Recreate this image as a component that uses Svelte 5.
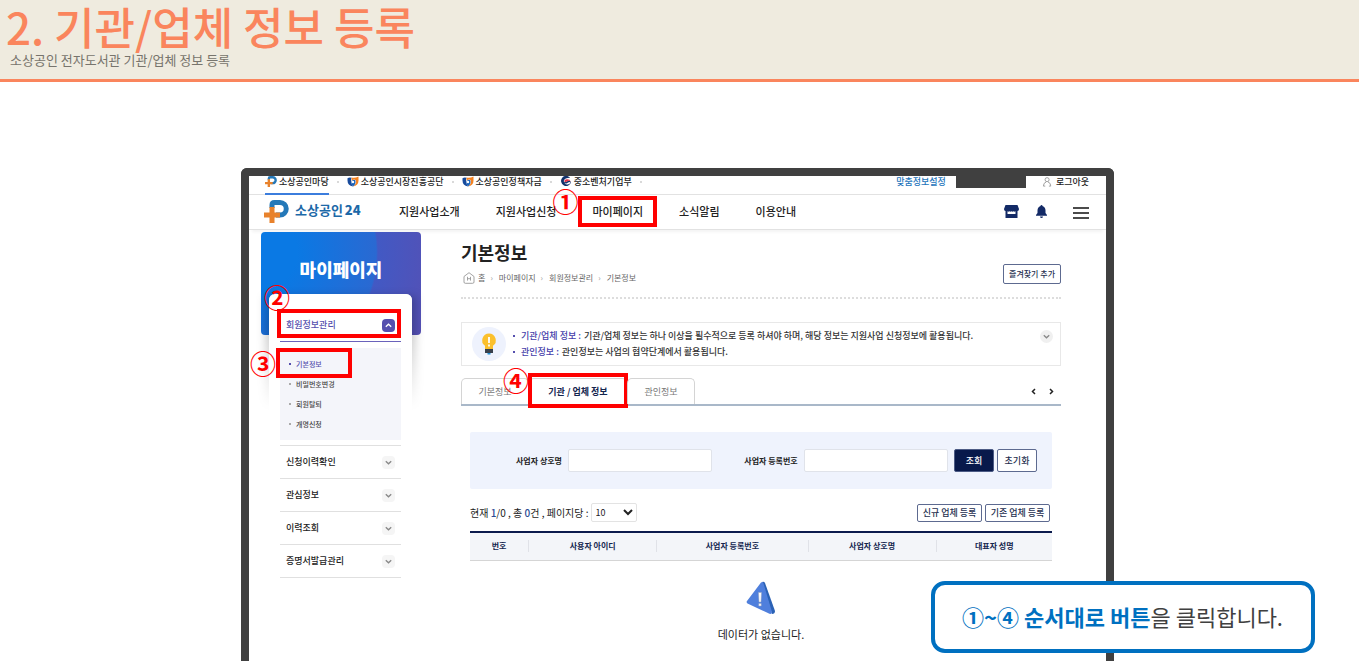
<script>
	const menu = ['지원사업소개', '지원사업신청', '마이페이지', '소식알림', '이용안내']
	const sites = [
		{ name: '소상공인마당', icon: 'plus' },
		{ name: '소상공인시장진흥공단', icon: 'semas' },
		{ name: '소상공인정책자금', icon: 'semas' },
		{ name: '중소벤처기업부', icon: 'gov' }
	]
	const subMenu = ['기본정보', '비밀번호변경', '회원탈퇴', '개명신청']
	const sideMenu = ['신청이력확인', '관심정보', '이력조회', '증명서발급관리']
	const path = ['홈', '마이페이지', '회원정보관리', '기본정보']
	const columns = ['번호', '사용자 아이디', '사업자 등록번호', '사업자 상호명', '대표자 성명']

	let company = $state('')
	let bizNumber = $state('')
	let pageSize = $state('10')

	const reset = () => {
		company = ''
		bizNumber = ''
	}
</script>

{#snippet plusLogo()}
	<svg viewBox="0 0 25 23" aria-hidden="true">
		<path d="M8 8V5q0-2.500 2.500-2.500H16a6 6 0 0 1 0 12.500h-4" fill="none" stroke="#2478b8" stroke-width="5" />
		<path d="M5.500 7h5v5.500H16v5h-5.500V23h-5v-5.500H0v-5h5.500z" fill="#e8822c" />
	</svg>
{/snippet}

{#snippet chevron(up)}
	<svg viewBox="0 0 12 12" aria-hidden="true">
		<path d={up ? 'M3.500 7.200 6 4.800l2.500 2.400' : 'M3.500 4.800 6 7.200l2.500-2.400'} fill="none" stroke="currentColor" stroke-width="1.200" />
	</svg>
{/snippet}

<div class="page">
	<header class="heading">
		<h1>2. 기관/업체 정보 등록</h1>
		<p>소상공인 전자도서관 기관/업체 정보 등록</p>
	</header>

	<div class="screen">
		<div class="topbar">
			{#each sites as site, i}
				<a href="#site" class:current={i === 0}>
					{#if site.icon === 'plus'}
						{@render plusLogo()}
					{:else if site.icon === 'semas'}
						<svg viewBox="0 0 12 12" aria-hidden="true">
							<path d="M0 2.500Q2 1 4.500 2 2.500 6 6 11.500 0 10.500 0 5z" fill="#174a9c" />
							<path d="M4.500 1.500Q8 2.500 12 .500V5q0 5.500-6 6.500 4-3 3-7-2-1.500-4.500 1z" fill="#f58220" />
							<path d="M4.500 5.500q2.500-2 4-1 1 4-2.500 7-2.500-3-1.500-6z" fill="#1a62b8" />
							<circle cx="6" cy="6.500" r="1.300" fill="#fff" />
						</svg>
					{:else}
						<svg viewBox="0 0 12 12" aria-hidden="true">
							<path d="M10.500 2A5.500 5.500 0 1 0 11.500 6.500Q9 4 7 6 4 8 3.500 5.500 4.500 2 10.500 2z" fill="#12316b" />
							<path d="M4 5.500Q5 3 7.500 3.500q3 0 3.500 2.500Q9 4.500 7 6 4.500 7.500 4 5.500z" fill="#e0344a" />
							<path d="M4 7q1 2 3.500.500T11 7Q10 9 7.500 9.200 4.800 9.500 4 7z" fill="#fff" />
						</svg>
					{/if}
					<span>{site.name}</span>
				</a>
				<i class="dot"></i>
			{/each}
			<div class="account">
				<a href="#custom" class="custom">맞춤정보설정</a>
				<span class="user"></span>
				<a href="#logout">
					<svg class="person" viewBox="0 0 12 12" aria-hidden="true">
						<circle cx="5" cy="4" r="2.200" fill="none" stroke="#999" />
						<path d="M1 11q0-3.500 3-4.500M9 11q0-3.500-3-4.500M1 11h2M7 11h2" fill="none" stroke="#999" />
					</svg>
					<span>로그아웃</span>
				</a>
			</div>
		</div>

		<nav class="gnb" aria-label="주메뉴">
			<a href="#home" class="logo">{@render plusLogo()}<span>소상공인<b>24</b></span></a>
			<ul>
				{#each menu as item, i}
					<li>
						<a href="#menu">{item}</a>
						{#if i === 2}<span class="mark one"><em>①</em></span>{/if}
					</li>
				{/each}
			</ul>
			<div class="tools">
				<button aria-label="상점">
					<svg width="15" height="13" viewBox="0 0 15 13">
						<path d="M1.500 0h12L15 4q0 2-1.500 2v7h-12V6Q0 6 0 4zM3.500 6.300V9h8V6.300q-1 .700-2 0-1 .700-2 0-1 .700-2 0-1 .700-2 0z" fill="#132a66" fill-rule="evenodd" />
					</svg>
				</button>
				<button aria-label="알림">
					<svg width="11" height="13" viewBox="0 0 11 13">
						<path d="M4.500 1a1 1 0 0 1 2 0Q9.500 2 9.500 5.500V8L11 10v.800H0V10l1.500-2V5.500Q1.500 2 4.500 1zM4 11.500h3Q6.800 13 5.500 13T4 11.500z" fill="#132a66" />
					</svg>
				</button>
				<button aria-label="전체메뉴" class="all">
					<svg width="16" height="12" viewBox="0 0 16 12">
						<path d="M0 1h16M0 6h16M0 11h16" stroke="#111" stroke-width="1.600" />
					</svg>
				</button>
			</div>
		</nav>

		<div class="body">
			<aside>
				<h2>마이페이지</h2>
				<div class="side-card">
					<div class="side-open">
						<a href="#member">회원정보관리</a>
						<button class="toggle on" aria-label="접기">{@render chevron(true)}</button>
						<span class="mark two"><em>②</em></span>
					</div>
					<ul class="sub">
						{#each subMenu as item, i}
							<li class:active={i === 0}>
								<a href="#sub">{item}</a>
								{#if i === 0}<span class="mark three"><em>③</em></span>{/if}
							</li>
						{/each}
					</ul>
					<ul class="side">
						{#each sideMenu as item}
							<li>
								<a href="#side">{item}</a>
								<button class="toggle" aria-label="펼치기">{@render chevron(false)}</button>
							</li>
						{/each}
					</ul>
				</div>
			</aside>

			<main>
				<div class="title">
					<div>
						<h2>기본정보</h2>
						<ol>
							{#each path as step, i}
								<li>
									{#if i === 0}
										<svg width="12" height="12" viewBox="0 0 12 12" aria-hidden="true">
											<path d="M1 4.500 6 .700l5 3.800v5.500q0 1.300-1.300 1.300H2.300Q1 11.300 1 10zM4.500 4.800v3.800M7.500 4.800v3.800M4.500 6.700h3" fill="none" stroke="#999" stroke-width=".900" />
										</svg>
									{/if}
									{step}
								</li>
							{/each}
						</ol>
					</div>
					<button class="line">즐겨찾기 추가</button>
				</div>

				<section class="notice">
					<svg width="34" height="34" viewBox="0 0 34 34" aria-hidden="true">
						<circle cx="17" cy="17" r="17" fill="#eef2fd" />
						<path d="M17 6.500a6.800 6.800 0 0 0-4 12.300V22h8v-3.200a6.800 6.800 0 0 0-4-12.300z" fill="#fbc02d" />
						<path d="M17 10v6M17 17.500v2" stroke="#fff" stroke-width="1.800" />
						<path d="M13 22h8v4h-8z" fill="#37404d" />
						<path d="M15.500 26h3v1.500h-3z" fill="#1d8fd8" />
					</svg>
					<ul>
						<li><b>기관/업체 정보 :</b> 기관/업체 정보는 하나 이상을 필수적으로 등록 하셔야 하며, 해당 정보는 지원사업 신청정보에 활용됩니다.</li>
						<li><b>관인정보 :</b> 관인정보는 사업의 협약단계에서 활용됩니다.</li>
					</ul>
					<button class="toggle round" aria-label="펼치기">{@render chevron(false)}</button>
				</section>

				<div class="tabs">
					<button>기본정보</button>
					<button class="selected">기관 / 업체 정보<span class="mark four"><em>④</em></span></button>
					<button>관인정보</button>
					<div class="arrows">
						<button aria-label="이전"><svg width="5" height="7" viewBox="0 0 5 7"><path d="M4 1 1.500 3.500 4 6" fill="none" stroke="#222" stroke-width="1.500" /></svg></button>
						<button aria-label="다음"><svg width="5" height="7" viewBox="0 0 5 7"><path d="M1 1l2.500 2.500L1 6" fill="none" stroke="#222" stroke-width="1.500" /></svg></button>
					</div>
				</div>

				<div class="content">
					<form class="search" onsubmit={(e) => e.preventDefault()}>
						<label for="company">사업자 상호명</label>
						<input id="company" type="text" bind:value={company}>
						<label for="biz">사업자 등록번호</label>
						<input id="biz" type="text" bind:value={bizNumber}>
						<div class="buttons">
							<button class="navy">조회</button>
							<button type="button" class="line" onclick={reset}>초기화</button>
						</div>
					</form>

					<div class="count">
						<label for="size">현재 <b>1</b>/0 , 총 <b>0</b>건 , 페이지당 :</label>
						<select id="size" bind:value={pageSize}>
							<option>10</option>
							<option>20</option>
							<option>50</option>
						</select>
						<div class="buttons">
							<button class="line">신규 업체 등록</button>
							<button class="line">기존 업체 등록</button>
						</div>
					</div>

					<table>
						<thead>
							<tr>
								{#each columns as column}
									<th><span>{column}</span></th>
								{/each}
							</tr>
						</thead>
						<tbody>
							<tr>
								<td colspan="5">
									<svg width="30" height="34" viewBox="0 0 30 34" aria-hidden="true">
										<path d="M16 1q2-1 3 1l10 28q0 3-3 3z" fill="#2b62b5" />
										<path d="M15 1.500q2-1.500 2.500 1L26 31q0 2.500-2.500 1.800L1.500 22.500Q0 21.500 1 20z" fill="#4f7fdc" />
										<path d="M12.500 11.500h3L15 21h-2zM12.800 22.500h2.400V25h-2.400z" fill="#fff" stroke="#98a5bd" stroke-width=".500" />
									</svg>
									<p>데이터가 없습니다.</p>
								</td>
							</tr>
						</tbody>
					</table>
				</div>
			</main>
		</div>
	</div>

	<p class="callout"><b>①~④ 순서대로 버튼</b>을 클릭합니다.</p>
</div>

<style>
	:global(body) {
		margin: 0;
		background: #fff;
	}
	.page, .page * {
		box-sizing: border-box;
	}
	.page {
		position: relative;
		display: flex;
		flex-direction: column;
		min-height: 100vh;
		font-family: "Noto Sans CJK KR", "Noto Sans", sans-serif;
		font-size: 9px;
		line-height: 12px;
		color: #222;
	}
	h1, h2, p, ul, ol {
		margin: 0;
		padding: 0;
	}
	ul, ol {
		list-style: none;
	}
	a {
		color: inherit;
		text-decoration: none;
	}
	button, input, select {
		font: inherit;
		color: inherit;
	}
	button {
		padding: 0;
		border: 0;
		background: none;
		cursor: pointer;
	}
	svg {
		display: block;
		flex: none;
	}

	.heading {
		padding: 0 6px 11px;
		background: #efebdf;
		border-bottom: 3px solid #fa855d;
	}
	h1 {
		font-size: 44px;
		font-weight: 500;
		line-height: 52px;
		color: #fa855d;
	}
	.heading p {
		padding-left: 4px;
		font-size: 13px;
		line-height: 16px;
		color: #77746c;
	}

	.screen {
		flex: 1;
		margin: 86px 245px 0 241px;
		border: 8px solid #404040;
		border-bottom: 0;
		border-radius: 6px 6px 0 0;
	}

	.topbar {
		display: flex;
		align-items: center;
		gap: 8px;
		height: 19px;
		padding: 0 17px 7px 16px;
		border-bottom: 1px solid #e2e2e2;
		font-weight: 500;
	}
	.topbar a {
		position: relative;
		display: flex;
		align-items: center;
		gap: 2px;
	}
	.topbar a svg {
		width: 12px;
		height: 11px;
	}
	.topbar .current::after {
		content: "";
		position: absolute;
		left: 0;
		right: 0;
		bottom: -7px;
		height: 2px;
		background: #3b7ddd;
	}
	.dot {
		width: 2px;
		height: 2px;
		border-radius: 50%;
		background: #ccc;
	}
	.account {
		display: flex;
		align-items: center;
		gap: 10px;
		margin-left: auto;
	}
	.account .custom {
		color: #1c74bb;
	}
	.user {
		width: 70px;
		height: 12px;
		margin-right: 6px;
		background: #404040;
	}

	.gnb {
		display: flex;
		align-items: center;
		height: 35px;
		padding: 0 17px 2px 15px;
		border-bottom: 1px solid #e2e2e2;
		box-shadow: 0 5px 3px -3px #f3f3f3;
	}
	.logo {
		display: flex;
		gap: 6px;
		width: 135px;
		font-size: 13px;
		font-weight: 700;
		line-height: 20px;
		color: #1d69a8;
	}
	.logo svg {
		width: 25px;
		height: 23px;
	}
	.logo b {
		padding-left: 2px;
	}
	.gnb ul {
		display: flex;
		gap: 36px;
		font-size: 11px;
		font-weight: 500;
		line-height: 16px;
	}
	.gnb li {
		position: relative;
	}
	.tools {
		display: flex;
		align-items: center;
		gap: 17px;
		margin-left: auto;
	}
	.tools .all {
		padding: 4px 0 0 9px;
	}

	/* red guide boxes and their numbers */
	.mark {
		position: absolute;
		border: 4px solid #f00;
		pointer-events: none;
	}
	.mark em {
		position: absolute;
		font-size: 26px;
		font-style: normal;
		font-weight: 700;
		line-height: 26px;
		color: #f00;
	}
	.one {
		inset: -7px -14px -8px;
	}
	.one em {
		left: -30px;
		top: -12px;
	}
	.two {
		inset: 15px 0 3px -3px;
	}
	.two em {
		left: -17px;
		top: -29px;
	}
	.three {
		inset: -6px 49px -4px -4px;
	}
	.three em {
		left: -30px;
		top: -2px;
	}
	.four {
		inset: -6px -2px -4px;
	}
	.four em {
		left: -29px;
		top: -10px;
	}

	.body {
		display: flex;
		gap: 40px;
		padding: 2px 45px 0 12px;
	}
	aside {
		flex: none;
		width: 160px;
	}
	aside h2 {
		height: 103px;
		padding-top: 25px;
		border-radius: 4px;
		background: radial-gradient(circle at 0 20%, #0a79e4 20%, #2a69d2 64%, #4259c4 65%, #5650b4);
		font-size: 18px;
		font-weight: 900;
		line-height: 24px;
		text-align: center;
		color: #fff;
	}
	.side-card {
		position: relative;
		z-index: 1;
		margin: -41px 9px 0 8px;
		padding: 0 11px;
		border-radius: 6px;
		background: #fff;
	}
	.side-card::before {
		content: "";
		position: absolute;
		z-index: -2;
		inset: 2px -4px auto;
		height: 112px;
		background: linear-gradient(#0003 30%, #0000);
		filter: blur(4px);
	}
	.side-card::after {
		content: "";
		position: absolute;
		z-index: -1;
		inset: 0;
		border-radius: 6px;
		background: #fff;
	}
	.side-open {
		position: relative;
		display: flex;
		align-items: center;
		justify-content: space-between;
		height: 48px;
		padding: 15px 6px 0;
		border-bottom: 1px solid #6a62bb;
		font-weight: 500;
		color: #554fae;
	}
	.toggle {
		width: 13px;
		height: 13px;
		border-radius: 4px;
		background: #f5f5f5;
		color: #888;
	}
	.toggle.on {
		background: #554fae;
		color: #fff;
	}
	.sub {
		margin: 6px 0 5px;
		padding: 6px 0;
		background: #f4f5fa;
		font-size: 7px;
		font-weight: 500;
		color: #444;
	}
	.sub li {
		position: relative;
		display: flex;
		align-items: center;
		gap: 5px;
		height: 20px;
		padding-left: 9px;
	}
	.sub li::before {
		content: "";
		width: 2px;
		height: 2px;
		background: #aaa;
	}
	.sub .active {
		color: #554fae;
	}
	.sub .active::before {
		background: #554fae;
	}
	.side {
		border-top: 1px solid #e0e0e0;
		font-weight: 500;
	}
	.side li {
		display: flex;
		align-items: center;
		justify-content: space-between;
		height: 33px;
		padding: 0 6px;
		border-bottom: 1px solid #e0e0e0;
	}

	main {
		flex: 1;
		min-width: 0;
	}
	.title {
		display: flex;
		align-items: flex-end;
		justify-content: space-between;
		padding: 8px 0 13px;
		border-bottom: 2px dotted #ddd;
	}
	.title h2 {
		font-size: 18px;
		line-height: 24px;
	}
	ol {
		display: flex;
		padding: 8px 2px 0;
		font-size: 8px;
		color: #666;
	}
	ol li {
		display: flex;
		align-items: center;
		gap: 3px;
	}
	ol li + li::before {
		content: "›";
		padding: 0 3px 0 5px;
		color: #999;
	}
	.line {
		border: 1px solid #5d6a90;
		border-radius: 2px;
		background: #fff;
		font-weight: 500;
		white-space: nowrap;
		color: #26304f;
	}
	.title .line {
		height: 20px;
		padding: 0 5px;
		font-size: 8px;
	}

	.notice {
		display: flex;
		align-items: center;
		margin: 23px 0 12px;
		min-height: 44px;
		padding: 0 7px 0 10px;
		border: 1px solid #e8e8e8;
	}
	.notice ul {
		flex: 1;
		padding-left: 7px;
		font-weight: 500;
		line-height: 16px;
		color: #333;
	}
	.notice li {
		display: flex;
		align-items: center;
		gap: 3px;
	}
	.notice li::before {
		content: "";
		width: 2px;
		height: 2px;
		margin-right: 3px;
		background: #554fae;
	}
	.notice b {
		font-weight: 500;
		color: #453eaa;
	}
	.toggle.round {
		align-self: flex-start;
		margin-top: 7px;
		border-radius: 50%;
		background: #f0f0f0;
	}

	.tabs {
		display: flex;
		height: 28px;
		border-bottom: 2px solid #a9b8c9;
	}
	.tabs > button {
		position: relative;
		width: 68px;
		border: 1px solid #d4d4d4;
		border-bottom: 0;
		border-radius: 5px 5px 0 0;
		color: #777;
	}
	.tabs > .selected {
		width: 98px;
		font-weight: 700;
		color: #14264f;
	}
	.arrows {
		display: flex;
		gap: 13px;
		margin-left: auto;
		padding-right: 7px;
	}

	.content {
		padding: 26px 9px 0;
	}
	.search {
		display: flex;
		align-items: center;
		justify-content: center;
		gap: 6px;
		height: 57px;
		padding: 0 15px 0 46px;
		border-radius: 2px;
		background: #eff3fd;
	}
	.search label {
		font-size: 8px;
		font-weight: 700;
		white-space: nowrap;
	}
	.search input {
		flex: 1;
		min-width: 0;
		height: 23px;
		border: 1px solid #e0e3ea;
		border-radius: 2px;
		background: #fff;
	}
	.search #company {
		margin-right: 26px;
	}
	.buttons {
		display: flex;
		gap: 3px;
	}
	.search button {
		width: 40px;
		height: 23px;
	}
	.navy {
		border: 1px solid #4c5b85;
		border-radius: 2px;
		background: #08194b;
		font-weight: 500;
		color: #fff;
	}
	.count {
		display: flex;
		align-items: center;
		gap: 2px;
		padding: 14px 2px 9px 0;
	}
	.count label {
		font-size: 10px;
	}
	.count b {
		font-weight: 500;
		color: #2c4c94;
	}
	.count select {
		width: 46px;
		height: 19px;
		border: 1px solid #e3e3e3;
		border-radius: 2px;
		background: #fff;
	}
	.count .buttons {
		margin-left: auto;
	}
	.count button {
		width: 65px;
		height: 18px;
	}

	table {
		width: 100%;
		border-collapse: collapse;
		table-layout: fixed;
		text-align: center;
	}
	th {
		height: 28px;
		padding: 0;
		border-top: 2px solid #0b1b4d;
		border-bottom: 1px solid #d5d5d5;
		background: #f3f5f9;
		font-size: 8px;
		color: #14264f;
	}
	th span {
		display: block;
		border-left: 1px solid #e0e2e8;
	}
	th:first-child span {
		border: 0;
	}
	th:nth-child(1) {
		width: 10%;
	}
	th:nth-child(2), th:nth-child(4) {
		width: 22%;
	}
	th:nth-child(3) {
		width: 26%;
	}
	td {
		padding: 20px 0;
	}
	td svg {
		margin: 0 auto;
	}
	td p {
		padding-top: 11px;
		font-size: 11px;
		line-height: 16px;
	}

	.callout {
		position: absolute;
		right: 44px;
		top: 581px;
		z-index: 2;
		padding: 15px 28px 17px 27px;
		border: 4px solid #0070c0;
		border-radius: 14px;
		background: #fff;
		font-size: 22px;
		line-height: 32px;
		color: #404040;
	}
	.callout b {
		color: #0070c0;
	}
</style>
